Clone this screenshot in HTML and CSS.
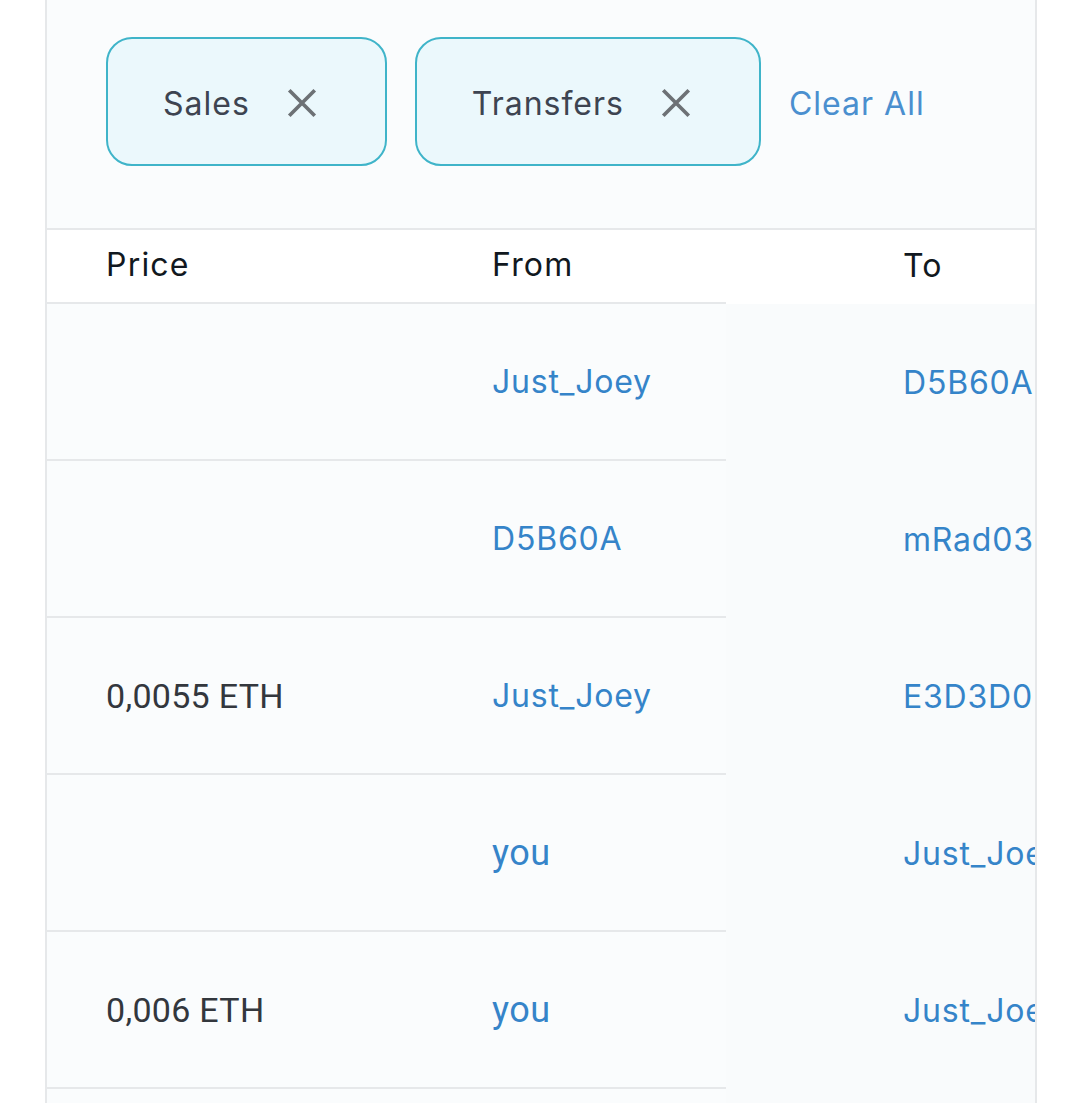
FILE: index.html
```html
<!DOCTYPE html>
<html lang="en">
<head>
    <meta charset="UTF-8">
    <meta name="viewport" content="width=device-width, initial-scale=1.0">
    <title>Item Activity</title>
    <link rel="stylesheet" href="styles.css">
</head>
<body>

    <div class="card">
        <div class="filters">
            <div class="chip">
                <span>Sales</span>
                <svg class="chip-close" viewBox="0 0 24 24" width="34" height="34">
                    <path d="M3 3 L21 21 M21 3 L3 21" />
                </svg>
            </div>
            <div class="chip">
                <span>Transfers</span>
                <svg class="chip-close" viewBox="0 0 24 24" width="34" height="34">
                    <path d="M3 3 L21 21 M21 3 L3 21" />
                </svg>
            </div>
            <a href="#" class="clear-all">Clear All</a>
        </div>

        <div class="table">
            <div class="row head">
                <div class="cell price">Price</div>
                <div class="cell from">From</div>
                <div class="cell to">To</div>
            </div>
            <div class="row">
                <div class="cell price"></div>
                <div class="cell from"><a href="#">Just_Joey</a></div>
                <div class="cell to"><a href="#">D5B60A</a></div>
            </div>
            <div class="row">
                <div class="cell price"></div>
                <div class="cell from"><a href="#">D5B60A</a></div>
                <div class="cell to"><a href="#">mRad03</a></div>
            </div>
            <div class="row">
                <div class="cell price amount">0,0055 ETH</div>
                <div class="cell from"><a href="#">Just_Joey</a></div>
                <div class="cell to"><a href="#">E3D3D0</a></div>
            </div>
            <div class="row">
                <div class="cell price"></div>
                <div class="cell from"><a href="#" class="narrow">you</a></div>
                <div class="cell to"><a href="#">Just_Joey</a></div>
            </div>
            <div class="row">
                <div class="cell price amount">0,006 ETH</div>
                <div class="cell from"><a href="#" class="narrow">you</a></div>
                <div class="cell to"><a href="#">Just_Joey</a></div>
            </div>
            <div class="row">
                <div class="cell price"></div>
                <div class="cell from"><a href="#">Just_Joey</a></div>
                <div class="cell to"><a href="#">you</a></div>
            </div>
        </div>
    </div>

</body>
</html>
```

FILE: styles.css
```css
body {
    font-family: Inter, "Noto Sans", sans-serif;
    margin: 0;
    background-color: #fff;
    height: 1103px;
    overflow: hidden;
}

.card {
    margin-left: 45px;
    width: 988px;
    height: 100%;
    background-color: #fafcfd;
    border-left: 2px solid #e6e8ea;
    border-right: 2px solid #e6e8ea;
    overflow: hidden;
}

/* filter chips */
.filters {
    display: flex;
    align-items: center;
    gap: 28px;
    padding: 37px 0 0 59px;
    margin-bottom: 62px;
}

.chip {
    display: flex;
    align-items: center;
    gap: 35px;
    height: 122px;
    padding: 3px 66px 0 55px;
    box-sizing: content-box;
    border: 2px solid #3fb4c9;
    border-radius: 26px;
    background-color: #ebf8fc;
    color: #3d4451;
    font-size: 32px;
    letter-spacing: 1px;
}

.chip-close {
    fill: none;
    stroke: #6d7175;
    stroke-width: 2.6;
}

.clear-all {
    color: #4a8fcf;
    font-size: 32px;
    text-decoration: none;
    letter-spacing: 1px;
    padding-top: 3px;
}

/* table */
.table {
    border-top: 2px solid #e6e8ea;
}

.row {
    display: flex;
    height: 157px;
}

.row.head {
    height: 74px;
    background-color: #fff;
    color: #111820;
}

.cell {
    display: flex;
    align-items: center;
    box-sizing: border-box;
    font-size: 32px;
    letter-spacing: 0.8px;
    white-space: nowrap;
}

.row.head .cell {
    padding-bottom: 4px;
    letter-spacing: 1.2px;
}

.cell.price {
    width: 385px;
    padding-left: 59px;
    border-bottom: 2px solid #e6e8ea;
}

.cell.from {
    width: 294px;
    padding-left: 60px;
    border-bottom: 2px solid #e6e8ea;
}

.cell.to {
    flex: 1;
    padding-left: 177px;
    overflow: hidden;
    background-color: #f9fbfc;
}

.row.head .cell.to {
    background-color: #fff;
}

.amount {
    color: #33373d;
    font-family: Roboto, "Noto Sans", sans-serif;
    font-size: 34px;
    letter-spacing: 0.3px;
}

.cell a {
    color: #3584c9;
    text-decoration: none;
}

.cell a.narrow {
    font-family: Roboto, "Noto Sans", sans-serif;
    font-size: 36px;
    letter-spacing: 0.5px;
}
```
